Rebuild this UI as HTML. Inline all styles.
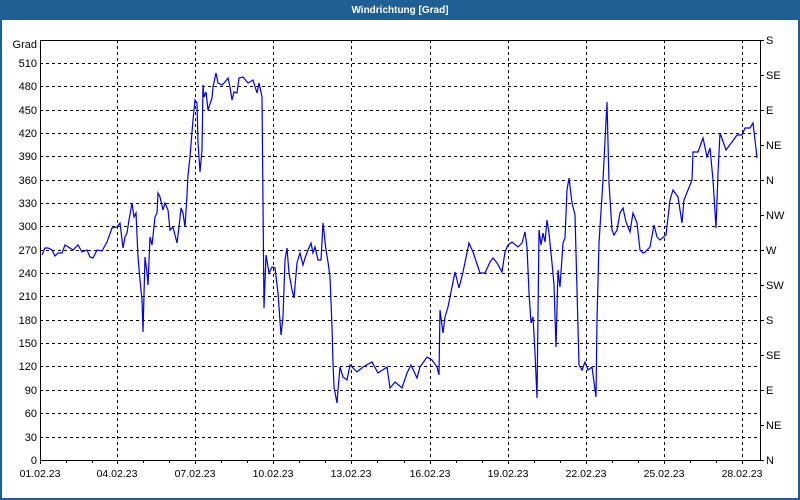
<!DOCTYPE html>
<html><head><meta charset="utf-8"><style>
html,body{margin:0;padding:0;width:800px;height:500px;overflow:hidden;background:#fff}
</style></head><body>
<svg width="800" height="500" xmlns="http://www.w3.org/2000/svg" font-family="'Liberation Sans', sans-serif" font-size="11">
<rect x="0" y="0" width="800" height="500" fill="#1f5f94"/>
<rect x="2" y="20" width="796" height="478" fill="#fff"/>
<text x="400" y="13" text-anchor="middle" fill="#fff" font-weight="bold" font-size="10">Windrichtung [Grad]</text>
<g stroke="#000" stroke-dasharray="3,3" stroke-width="1">
<path d="M40 63.5H760M40 86.5H760M40 110.5H760M40 133.5H760M40 156.5H760M40 180.5H760M40 203.5H760M40 226.5H760M40 250.5H760M40 273.5H760M40 296.5H760M40 320.5H760M40 343.5H760M40 366.5H760M40 390.5H760M40 413.5H760M40 437.5H760"/>
<path d="M117.5 40V460M195.5 40V460M273.5 40V460M351.5 40V460M430.5 40V460M508.5 40V460M586.5 40V460M664.5 40V460M742.5 40V460"/>
</g>
<rect x="40.5" y="40.5" width="720" height="420" fill="none" stroke="#000"/>
<g stroke="#000"><path d="M760 40.5h4M760 75.5h4M760 110.5h4M760 145.5h4M760 180.5h4M760 215.5h4M760 250.5h4M760 285.5h4M760 320.5h4M760 355.5h4M760 390.5h4M760 425.5h4M760 460.5h4"/>
<path d="M40.5 460v4M66.5 460v3M92.5 460v3M117.5 460v4M143.5 460v3M169.5 460v3M195.5 460v4M221.5 460v3M247.5 460v3M273.5 460v4M299.5 460v3M325.5 460v3M351.5 460v4M377.5 460v3M404.5 460v3M430.5 460v4M456.5 460v3M482.5 460v3M508.5 460v4M534.5 460v3M560.5 460v3M586.5 460v4M612.5 460v3M638.5 460v3M664.5 460v4M690.5 460v3M716.5 460v3M742.5 460v4"/></g>
<g text-anchor="end" fill="#000">
<text x="37" y="48">Grad</text><text x="37" y="67">510</text><text x="37" y="90">480</text><text x="37" y="114">450</text><text x="37" y="137">420</text><text x="37" y="160">390</text><text x="37" y="184">360</text><text x="37" y="207">330</text><text x="37" y="230">300</text><text x="37" y="254">270</text><text x="37" y="277">240</text><text x="37" y="300">210</text><text x="37" y="324">180</text><text x="37" y="347">150</text><text x="37" y="370">120</text><text x="37" y="394">90</text><text x="37" y="417">60</text><text x="37" y="441">30</text><text x="37" y="464">0</text>
</g>
<g fill="#000">
<text x="766" y="44">S</text><text x="766" y="79">SE</text><text x="766" y="114">E</text><text x="766" y="149">NE</text><text x="766" y="184">N</text><text x="766" y="219">NW</text><text x="766" y="254">W</text><text x="766" y="289">SW</text><text x="766" y="324">S</text><text x="766" y="359">SE</text><text x="766" y="394">E</text><text x="766" y="429">NE</text><text x="766" y="464">N</text>
</g>
<g text-anchor="middle" fill="#000" font-size="10.5">
<text x="40" y="477">01.02.23</text><text x="117" y="477">04.02.23</text><text x="195" y="477">07.02.23</text><text x="273" y="477">10.02.23</text><text x="351" y="477">13.02.23</text><text x="430" y="477">16.02.23</text><text x="508" y="477">19.02.23</text><text x="586" y="477">22.02.23</text><text x="664" y="477">25.02.23</text><text x="742" y="477">28.02.23</text>
</g>
<polyline fill="none" stroke="#0000ee" stroke-width="1.2" points="42,255 45,248 48,248 52,250 55,256 58,253 62,253 65,245 70,248 73,250 78,245 82,252 87,250 90,257 93,258 97,250 102,251 107,242 112,228 117,227 120,223 123,248 125,237 127,233 129,220 132,203 134,217 136,213 138,257 140,280 142,300 143,332 145,257 147,273 148,285 150,237 152,245 155,217 157,213 158,193 160,197 163,210 165,203 168,210 170,230 173,227 175,235 177,243 179,227 181,208 183,213 185,227 187,195 188,175 190,157 192,132 193,120 195,100 197,103 198,143 200,172 202,150 203,85 204,97 206,92 208,110 212,98 213,87 216,73 218,83 222,85 225,82 228,78 230,87 232,100 234,92 237,93 239,78 243,77 248,83 253,80 257,93 259,83 262,97 263,203 264,308 266,255 269,273 272,267 275,268 278,293 281,335 283,317 285,260 287,248 289,273 292,290 294,298 297,263 300,253 303,265 305,258 308,250 311,243 313,253 315,247 318,260 321,260 323,223 326,250 328,262 330,277 332,327 333,363 334,387 337,403 338,390 340,367 343,377 347,380 350,365 357,372 363,367 372,362 378,373 387,367 390,388 395,382 402,388 407,373 411,365 417,378 420,367 427,357 432,360 437,367 439,375 440,310 443,333 445,317 448,307 450,297 455,272 459,288 463,272 469,243 473,252 480,273 485,273 490,262 493,258 497,263 502,272 505,252 508,245 512,242 518,247 522,243 525,232 527,247 529,293 531,323 533,317 535,353 537,398 539,230 541,245 543,233 545,242 547,220 549,233 552,263 554,285 556,347 558,270 560,287 563,243 565,238 567,190 569,178 572,203 575,215 577,290 579,365 582,370 585,362 588,370 592,367 596,397 597,320 599,243 603,180 607,102 609,183 612,230 614,235 617,230 620,213 623,208 626,222 630,232 633,213 637,223 640,250 643,253 645,252 650,247 654,225 657,237 660,240 666,235 670,200 673,190 678,197 682,223 684,200 688,190 692,180 693,152 698,152 703,138 707,157 710,148 713,180 716,228 718,173 720,133 726,150 732,142 737,135 742,135 745,128 750,128 753,123 755,140 757,158"/>
</svg>
</body></html>
